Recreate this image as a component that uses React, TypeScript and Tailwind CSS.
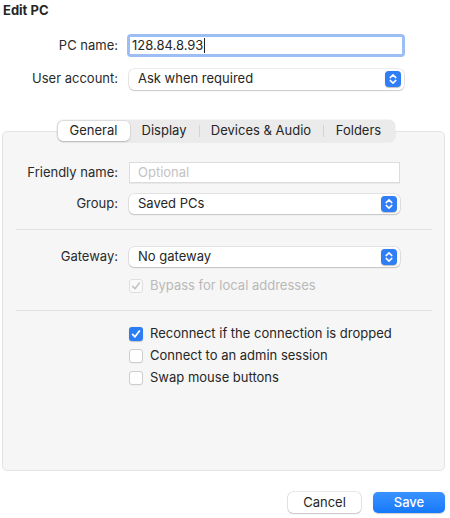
import type { ReactNode } from "react";

const font = { fontFamily: "Inter, 'Noto Sans', sans-serif" };

function Chevrons() {
  return (
    <span className="flex h-[16px] w-[16px] items-center justify-center rounded-[4px] bg-[#2f7ef6] shadow-[0_0.5px_1px_rgba(0,0,0,0.25)]">
      <svg width="16" height="16" viewBox="0 0 16 16" fill="none">
        <path d="M5.2 6.6 L8 3.9 L10.8 6.6" stroke="white" strokeWidth="1.5" strokeLinecap="round" strokeLinejoin="round" />
        <path d="M5.2 9.4 L8 12.1 L10.8 9.4" stroke="white" strokeWidth="1.5" strokeLinecap="round" strokeLinejoin="round" />
      </svg>
    </span>
  );
}

function Select({ value, width, height }: { value: string; width: string; height: string }) {
  return (
    <div
      className={`flex items-center justify-between rounded-[5px] bg-white pl-[9px] pr-[3px] text-[13px] text-[#262626] shadow-[0_0_0_0.5px_rgba(0,0,0,0.16),0_1px_1.5px_rgba(0,0,0,0.14)] ${width} ${height}`}
    >
      <span>{value}</span>
      <Chevrons />
    </div>
  );
}

function Check({ checked, disabled }: { checked?: boolean; disabled?: boolean }) {
  if (checked && disabled) {
    return (
      <span className="flex h-[14px] w-[14px] items-center justify-center rounded-[3px] border border-[#dedede] bg-[#fafafa]">
        <svg width="12" height="12" viewBox="0 0 12 12" fill="none">
          <path d="M2.6 6.4 L5 8.8 L9.4 3" stroke="#c4c4c4" strokeWidth="1.6" strokeLinecap="round" strokeLinejoin="round" />
        </svg>
      </span>
    );
  }
  if (checked) {
    return (
      <span className="flex h-[14px] w-[14px] items-center justify-center rounded-[3px] bg-[#2b7df6] shadow-[0_0.5px_1px_rgba(0,0,0,0.2)]">
        <svg width="12" height="12" viewBox="0 0 12 12" fill="none">
          <path d="M2.6 6.4 L5 8.8 L9.4 3" stroke="white" strokeWidth="1.8" strokeLinecap="round" strokeLinejoin="round" />
        </svg>
      </span>
    );
  }
  return (
    <span className="h-[14px] w-[14px] rounded-[3px] border border-[#cdcdcd] bg-white shadow-[0_0.5px_0.5px_rgba(0,0,0,0.06)]" />
  );
}

function CheckRow({ label, checked, disabled }: { label: string; checked?: boolean; disabled?: boolean }) {
  return (
    <div className="flex h-[22px] items-center pl-[126px]">
      <Check checked={checked} disabled={disabled} />
      <span className={`ml-[7px] text-[13px] ${disabled ? "text-[#b9b9b9]" : "text-[#262626]"}`}>{label}</span>
    </div>
  );
}

function Row({ label, labelWidth, children, className }: { label: string; labelWidth: string; children: ReactNode; className: string }) {
  return (
    <div className={`flex items-center ${className}`}>
      <span className={`shrink-0 text-right text-[13px] text-[#2a2a2a] ${labelWidth}`}>{label}</span>
      {children}
    </div>
  );
}

export default function App() {
  return (
    <div className="flex h-[518px] w-[450px] flex-col bg-white" style={font}>
      <div className="h-[20px] pl-[3px] pt-[2px] text-[13px] font-bold leading-[16px] text-[#262626]">
        Edit PC
      </div>

      <Row label="PC name:" labelWidth="w-[118px]" className="mt-[14px] h-[23px]">
        <div className="ml-[9px] flex h-[23px] w-[278px] rounded-[4px] bg-[#9dbef5] p-[3px]">
          <div className="flex flex-1 items-center bg-white pl-[2px] text-[13px] text-[#262626]">
            128.84.8.93
            <span className="ml-[1px] h-[15px] w-px bg-[#222]" />
          </div>
        </div>
      </Row>

      <Row label="User account:" labelWidth="w-[118px]" className="mt-[11px] h-[22px]">
        <div className="ml-[11px]">
          <Select value="Ask when required" width="w-[275px]" height="h-[21px]" />
        </div>
      </Row>

      <div className="relative z-10 mt-[30px] flex justify-center pl-[1px]">
        <div className="flex h-[22px] items-center rounded-[6px] bg-[#ebebeb] p-[1px] text-[13px] text-[#262626] shadow-[0_0_0_0.5px_rgba(0,0,0,0.08)]">
          <div className="flex h-[20px] w-[72px] items-center justify-center rounded-[5px] bg-white shadow-[0_0_0_0.5px_rgba(0,0,0,0.12),0_1px_1.5px_rgba(0,0,0,0.15)]">
            General
          </div>
          <div className="flex h-[20px] w-[69px] items-center justify-center">Display</div>
          <span className="h-[12px] w-px bg-[#d3d3d3]" />
          <div className="flex h-[20px] w-[123px] items-center justify-center">Devices &amp; Audio</div>
          <span className="h-[12px] w-px bg-[#d3d3d3]" />
          <div className="flex h-[20px] w-[70px] items-center justify-center">Folders</div>
        </div>
      </div>

      <div className="mx-[2px] mr-[5px] -mt-[11px] flex h-[340px] flex-col rounded-[5px] border border-[#e4e4e4] bg-[#f6f6f6] pt-[30px]">
        <Row label="Friendly name:" labelWidth="w-[115px]" className="h-[21px]">
          <div className="ml-[11px] flex h-[21px] w-[271px] items-center border border-[#dcdcdc] bg-white pl-[8px] text-[13px] text-[#c3c3c3] shadow-[0_0.5px_0.5px_rgba(0,0,0,0.05)]">
            Optional
          </div>
        </Row>

        <Row label="Group:" labelWidth="w-[115px]" className="mt-[11px] h-[20px]">
          <div className="ml-[11px]">
            <Select value="Saved PCs" width="w-[271px]" height="h-[20px]" />
          </div>
        </Row>

        <div className="ml-[13px] mr-[12px] mt-[15px] h-px bg-[#e0e0e0]" />

        <Row label="Gateway:" labelWidth="w-[115px]" className="mt-[17px] h-[20px]">
          <div className="ml-[11px]">
            <Select value="No gateway" width="w-[271px]" height="h-[20px]" />
          </div>
        </Row>

        <div className="mt-[8px]">
          <CheckRow label="Bypass for local addresses" checked disabled />
        </div>

        <div className="ml-[13px] mr-[12px] mt-[13px] h-px bg-[#e0e0e0]" />

        <div className="mt-[12px] flex flex-col">
          <CheckRow label="Reconnect if the connection is dropped" checked />
          <CheckRow label="Connect to an admin session" />
          <CheckRow label="Swap mouse buttons" />
        </div>
      </div>

      <div className="mr-[5px] mt-[21px] flex justify-end gap-[12px]">
        <button className="flex h-[21px] w-[73px] items-center justify-center rounded-[5px] bg-white text-[13px] text-[#262626] shadow-[0_0_0_0.5px_rgba(0,0,0,0.18),0_1px_1.5px_rgba(0,0,0,0.15)]">
          Cancel
        </button>
        <button className="flex h-[21px] w-[72px] items-center justify-center rounded-[5px] bg-gradient-to-b from-[#3a92ff] to-[#1479fb] text-[13px] font-medium text-white shadow-[0_0.5px_1px_rgba(0,0,0,0.2)]">
          Save
        </button>
      </div>
    </div>
  );
}
